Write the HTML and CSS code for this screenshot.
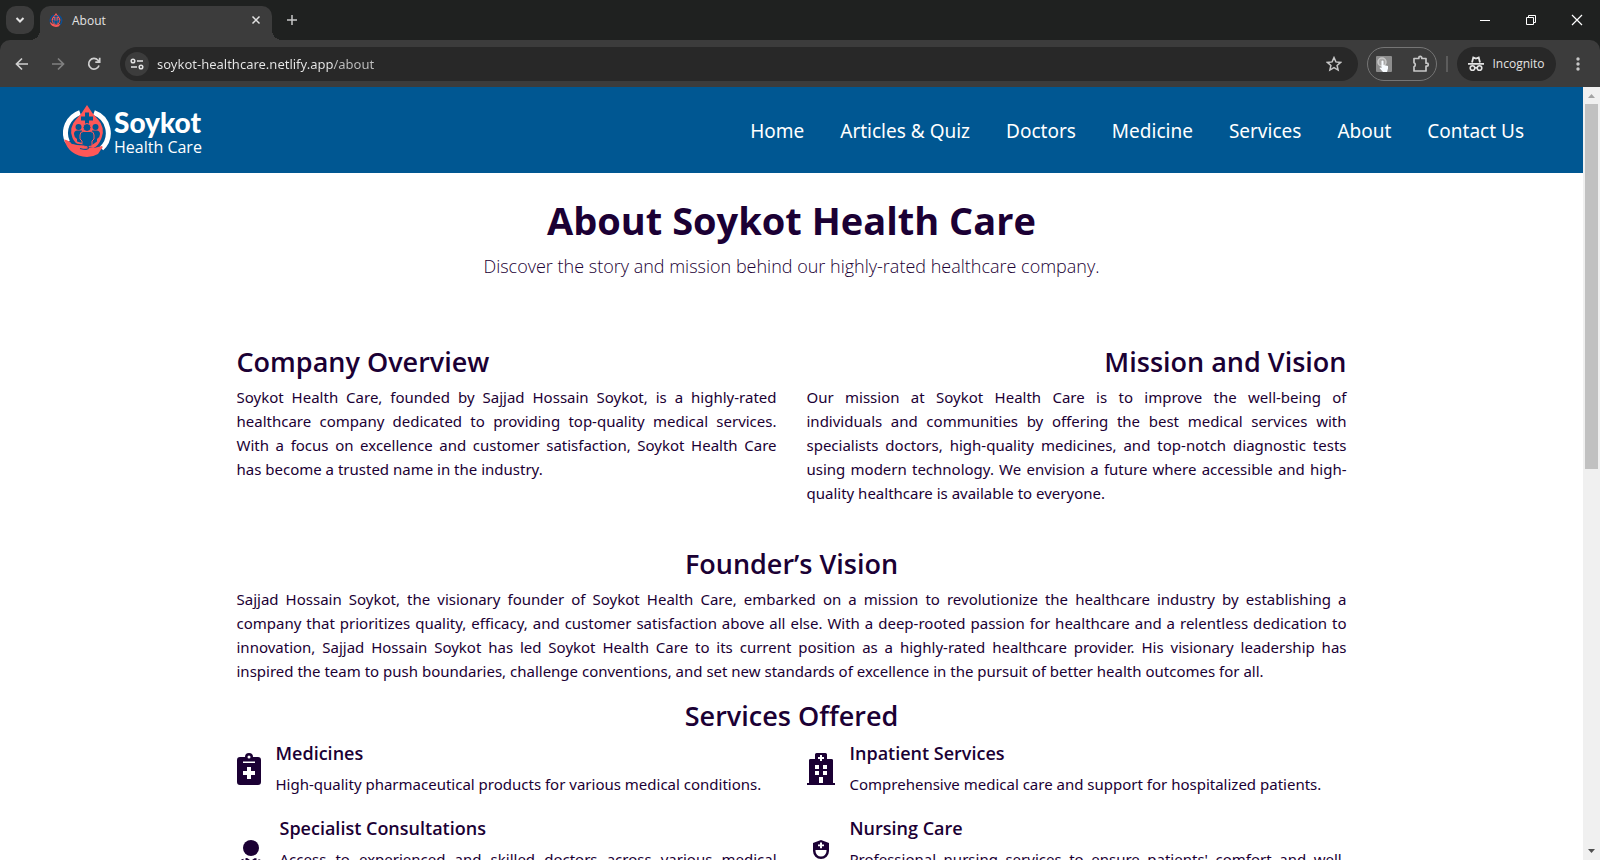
FILE: index.html
```html
<!DOCTYPE html>
<html lang="en">
<head>
<meta charset="utf-8">
<title>About</title>
<link rel="stylesheet" href="styles.css">
</head>
<body>
<div class="browser">
  <div class="tabstrip">
    <button class="tab-search" aria-label="Search tabs"><svg width="12" height="12" viewBox="0 0 12 12"><path d="M2.5 4 6 7.500 9.500 4" fill="none" stroke="#e3e3e3" stroke-width="2"/></svg></button>
    <div class="tab">
      <svg width="14" height="14" viewBox="0 0 48 52"><use href="#mark-ring" stroke="#0b4f96"/><use href="#mark-drop"/></svg>
      <span class="tab-title">About</span>
      <button class="plain tab-close" aria-label="Close tab"><svg width="10" height="10" viewBox="0 0 10 10"><path d="M1.500 1.500l7 7M8.500 1.500l-7 7" stroke="#e3e3e3" stroke-width="1.500"/></svg></button>
    </div>
    <button class="plain new-tab" aria-label="New tab"><svg width="12" height="12" viewBox="0 0 12 12"><path d="M6 1v10M1 6h10" stroke="#c7c7c7" stroke-width="1.500"/></svg></button>
    <div class="window-controls">
      <button class="plain" aria-label="Minimize"><svg width="12" height="12" viewBox="0 0 12 12"><path d="M1 6.500h10" stroke="#fff"/></svg></button>
      <button class="plain" aria-label="Restore"><svg width="12" height="12" viewBox="0 0 12 12"><path d="M1.500 3.500h7v7h-7zM3.500 3.500v-2h7v7h-2" fill="none" stroke="#fff"/></svg></button>
      <button class="plain" aria-label="Close"><svg width="12" height="12" viewBox="0 0 12 12"><path d="M1 1l10 10M11 1 1 11" stroke="#fff" stroke-width="1.200"/></svg></button>
    </div>
  </div>
  <div class="toolbar">
    <button class="plain nav-btn" aria-label="Back"><svg width="14" height="14" viewBox="0 0 14 14"><path d="M13 7H2M7 1.500 1.500 7 7 12.500" fill="none" stroke="#d0d0d0" stroke-width="1.700"/></svg></button>
    <button class="plain nav-btn" aria-label="Forward"><svg width="14" height="14" viewBox="0 0 14 14"><path d="M1 7h11M7 1.500 12.500 7 7 12.500" fill="none" stroke="#808080" stroke-width="1.700"/></svg></button>
    <button class="plain nav-btn" aria-label="Reload"><svg width="14" height="14" viewBox="0 0 14 14"><path d="M12 8.500A5.300 5.300 0 1 1 11 3.300L12.500 5M12.700.8v4.400H8.300" fill="none" stroke="#d0d0d0" stroke-width="1.700"/></svg></button>
    <div class="omnibox">
      <button class="site-info" aria-label="Site information"><svg width="14" height="12" viewBox="0 0 14 12"><g fill="none" stroke="#e3e3e3" stroke-width="1.500"><circle cx="3" cy="3" r="1.800"/><path d="M7 3h6M1 9h6"/><circle cx="11" cy="9" r="1.800"/></g></svg></button>
      <input class="address" type="text" aria-label="Address" value="soykot-healthcare.netlify.app/about">
      <button class="plain" aria-label="Bookmark"><svg width="16" height="16" viewBox="0 0 16 16"><path d="M8 1.600l1.900 4.300 4.700.5-3.500 3.100 1 4.600L8 11.700l-4.100 2.400 1-4.600L1.400 6.400l4.700-.5z" fill="none" stroke="#c7c7c7" stroke-width="1.500"/></svg></button>
    </div>
    <div class="extensions">
      <button class="plain" aria-label="Click extension"><svg width="16" height="16" viewBox="0 0 16 16"><rect width="16" height="16" rx="1" fill="#8e8e8e"/><circle cx="6" cy="6" r="4" fill="#a8a8a8" stroke="#c8c8c8" stroke-width="1.500"/><path d="M5.500 5q1-1 2 0v4l4.500 1v2.500L11 16H7l-3.500-4q.5-1.200 2 0z" fill="#f7fbff"/></svg></button>
      <button class="plain" aria-label="Extensions"><svg width="18" height="18" viewBox="0 0 18 18"><path d="M2 3.500h4.800V2.800a1.500 1.500 0 0 1 3 0v.7H14v4.700h.8a1.500 1.500 0 0 1 0 3H14V16H2v-4.200a2.200 2.200 0 0 0 0-4z" fill="none" stroke="#c7c7c7" stroke-width="1.700" stroke-linejoin="round"/></svg></button>
    </div>
    <span class="divider"></span>
    <button class="incognito"><svg width="16" height="16" viewBox="0 0 16 16"><path d="M4 6.500 5.300 1.500 8 2.500l2.700-1L12 6.500M0 7.800h16" fill="none" stroke="#e3e3e3" stroke-width="1.800"/><g fill="none" stroke="#e3e3e3" stroke-width="1.600"><circle cx="4.500" cy="12" r="2.300"/><circle cx="11.500" cy="12" r="2.300"/><path d="M6.800 11.800h2.400"/></g></svg>Incognito</button>
    <button class="plain menu" aria-label="Menu"><svg width="4" height="16" viewBox="0 0 4 16" fill="#c7c7c7"><circle cx="2" cy="3" r="1.700"/><circle cx="2" cy="8" r="1.700"/><circle cx="2" cy="13" r="1.700"/></svg></button>
  </div>
  <div class="viewport">
    <div class="page">
      <header class="site-header">
        <a class="brand" href="#">
          <svg width="48" height="52" viewBox="0 0 48 52">
            <defs>
              <path id="mark-ring" d="M17 7.600A21.500 21.500 0 0 0 4.500 37M31 7.600A21.500 21.500 0 0 1 38.500 43.500" fill="none" stroke-width="5"/>
              <g id="mark-drop">
                <path d="M24 0Q29 8.500 35 14.500a16.500 16.500 0 0 1 3.500 18.500q-3 8-8 10l-13-2q-6-3-8-8A16.500 16.500 0 0 1 13 14.500Q19 8.500 24 0z" fill="#ff5757"/>
                <path d="M1 34.500Q6 35 9 39l9 1 8 3h5l8-2q1.500 1.500-1 3.500l-3 4.500q-5 3-11 3-18-1-23-17.500z" fill="#ff5757"/>
                <path d="M22 7.500h4v4h4v4h-4v4h-4v-4h-4v-4h4z" fill="#005792"/>
                <g fill="#005792"><circle cx="15.500" cy="22" r="3"/><circle cx="32.500" cy="22" r="3"/><path d="M11 29q0-3.500 3.500-3.500H19V38l-5-1.500V34q-3-2-3-5zM37 29q0-3.500-3.500-3.500H29V40l5-3.500V34q3-2 3-5z"/></g>
                <g fill="#005792" stroke="#ff5757"><circle cx="24" cy="22.500" r="4"/><path d="M17 30q0-3.500 3.500-3.500h7q3.500 0 3.500 3.500v4l-2 2v5q-5 2-10-1v-4l-2-2z"/></g>
                <path d="M8 37.500q6 2.500 13 2.500 5 .5 4.500 3T17 43.500" fill="none" stroke="#005792" stroke-width="1.200"/>
              </g>
            </defs>
            <use href="#mark-ring" stroke="#fff"/><use href="#mark-drop"/>
          </svg>
          <span class="brand-text"><strong class="brand-name">Soykot</strong><span class="brand-sub">Health Care</span></span>
        </a>
        <nav class="site-nav">
          <a href="#">Home</a><a href="#">Articles &amp; Quiz</a><a href="#">Doctors</a><a href="#">Medicine</a><a href="#">Services</a><a href="#">About</a><a href="#">Contact Us</a>
        </nav>
      </header>
      <main class="content">
        <section class="intro">
          <h1>About Soykot Health Care</h1>
          <p>Discover the story and mission behind our highly-rated healthcare company.</p>
        </section>
        <div class="columns overview">
          <section>
            <h2>Company Overview</h2>
            <p>Soykot Health Care, founded by Sajjad Hossain Soykot, is a highly-rated healthcare company dedicated to providing top-quality medical services. With a focus on excellence and customer satisfaction, Soykot Health Care has become a trusted name in the industry.</p>
          </section>
          <section>
            <h2 class="right">Mission and Vision</h2>
            <p>Our mission at Soykot Health Care is to improve the well-being of individuals&nbsp;and communities by offering the best medical services with specialists doctors, high-quality medicines, and top-notch diagnostic tests using&nbsp;modern technology. We envision a future where accessible and high-quality healthcare is available to everyone.</p>
          </section>
        </div>
        <section class="founder">
          <h2 class="center">Founder’s Vision</h2>
          <p>Sajjad Hossain Soykot, the visionary founder of Soykot Health Care, embarked on a mission to revolutionize the healthcare industry by establishing a company that prioritizes quality, efficacy, and customer satisfaction above all else. With a deep-rooted passion for healthcare and a relentless dedication to innovation, Sajjad Hossain Soykot has led Soykot Health Care to its current position as a highly-rated healthcare provider. His visionary leadership has inspired&nbsp;the team to push boundaries, challenge conventions, and set new standards of excellence in the pursuit of better health outcomes for all.</p>
        </section>
        <section class="services">
          <h2 class="center">Services Offered</h2>
          <div class="columns service-grid">
            <article class="service">
              <svg width="24" height="32" viewBox="0 0 384 512" fill="currentColor"><path fill-rule="evenodd" d="M336 64h-80a64 64 0 0 0-128 0H48a48 48 0 0 0-48 48v352a48 48 0 0 0 48 48h288a48 48 0 0 0 48-48V112a48 48 0 0 0-48-48zM192 40a24 24 0 1 1 0 48 24 24 0 0 1 0-48zM96 136h192v24H96zM160 224h64v64h64v64h-64v64h-64v-64H96v-64h64z"/></svg>
              <div><h3>Medicines</h3><p>High-quality pharmaceutical products for various medical conditions.</p></div>
            </article>
            <article class="service">
              <svg width="28" height="32" viewBox="0 0 448 512" fill="currentColor"><path fill-rule="evenodd" d="M128 96V24q0-24 24-24h144q24 0 24 24v72h72q24 0 24 20v364h32v32H0v-32h32V116q0-20 24-20zM208 32v32h-32v32h32v32h32V96h32V64h-32V32zM128 192v64h64v-64zM256 192v64h64v-64zM128 288v64h64v-64zM256 288v64h64v-64zM192 384v96h64v-96z"/></svg>
              <div><h3>Inpatient Services</h3><p>Comprehensive medical care and support for hospitalized patients.</p></div>
            </article>
            <article class="service">
              <svg width="28" height="32" viewBox="0 0 448 512" fill="currentColor"><circle cx="224" cy="128" r="128"/><path d="M104 299v58a56 56 0 1 0 32 0v-66q20-3 32 0l56 42 56-42q14-2 32 2v44q-56 12-56 80h32q0-48 40-48t40 48h32q0-68-56-80v-32q104 30 104 135v24q0 48-45 48H45q-45 0-45-48v-24q0-105 104-141z"/></svg>
              <div><h3>Specialist Consultations</h3><p>Access to experienced and skilled doctors across various medical specialties and fields.</p></div>
            </article>
            <article class="service">
              <svg width="28" height="32" viewBox="0 0 448 512" fill="currentColor"><path fill-rule="evenodd" d="M96 48 224 0l128 48v128a128 128 0 0 1-256 0zM208 40v32h-32v28h32v32h32v-32h32V72h-32V40zM136 160v16a88 88 0 0 0 176 0v-16z"/><path d="M320 320l-96 96-96-96Q0 336 0 464q0 48 45 48h358q45 0 45-48 0-128-128-144z"/></svg>
              <div><h3>Nursing Care</h3><p>Professional nursing services to ensure patients' comfort and well-being throughout their entire stay.</p></div>
            </article>
          </div>
        </section>
      </main>
    </div>
    <div class="scrollbar">
      <svg width="17" height="17" viewBox="0 0 17 17"><path d="M5 11h7L8.500 7z" fill="#a3a3a3"/></svg>
      <div class="track"><div class="thumb"></div></div>
      <svg width="17" height="17" viewBox="0 0 17 17"><path d="M5 6h7l-3.500 4z" fill="#505050"/></svg>
    </div>
  </div>
</div>
</body>
</html>
```
FILE: styles.css
```css
* { box-sizing: border-box; }
body { margin: 0; font-family: "Open Sans", "Noto Sans", sans-serif; color: #1b0034; }
button { font: inherit; color: inherit; border: 0; padding: 0; display: flex; align-items: center; justify-content: center; }
.plain { background: none; }
h1, h2, h3, p { margin: 0; }

.browser { display: flex; flex-direction: column; height: 100vh; overflow: hidden; background: #1f2120; }

.tabstrip { display: flex; align-items: center; height: 40px; flex: none; padding-left: 6px; color: #e3e3e3; }
.tab-search { width: 28px; height: 28px; border-radius: 10px; background: #3c3c3c; }
.tab { position: relative; display: flex; align-items: center; align-self: flex-end; gap: 9px; width: 232px; height: 34px; margin-left: 6px; padding: 0 11px 6px 9px; border-radius: 10px 10px 0 0; background: #3c3c3c; }
.tab::before, .tab::after { content: ""; position: absolute; bottom: 0; width: 10px; height: 10px; }
.tab::before { left: -10px; background: radial-gradient(circle at 0 0, transparent 10px, #3c3c3c 10px); }
.tab::after { right: -10px; background: radial-gradient(circle at 100% 0, transparent 10px, #3c3c3c 10px); }
.tab-title { flex: 1; font-size: 12px; }
.new-tab { width: 40px; height: 40px; }
.window-controls { display: flex; margin-left: auto; }
.window-controls button { width: 46px; height: 40px; }

.toolbar { display: flex; align-items: center; height: 47px; flex: none; padding: 0 16px 0 4px; border-radius: 10px 10px 0 0; background: #3c3c3c; color: #e3e3e3; }
.nav-btn { width: 36px; height: 34px; }
.omnibox { display: flex; align-items: center; flex: 1; height: 34px; margin-left: 8px; padding: 0 16px 0 5px; border-radius: 17px; background: #282828; }
.site-info { width: 24px; height: 24px; border-radius: 50%; background: #3c3c3c; }
.address { flex: 1; min-width: 0; margin-left: 8px; padding: 0; border: 0; font: 13px/20px "Noto Sans", sans-serif; color: transparent; background: linear-gradient(90deg, #e8e8e8 176px, #c0c0c0 176px); background-clip: text; }
.extensions { display: flex; align-items: center; justify-content: space-between; width: 70px; height: 34px; margin-left: 9px; padding: 0 6px 0 8px; border: 1px solid #757575; border-radius: 17px; }
.divider { width: 2px; height: 16px; margin: 0 9px; background: #5c5c5c; }
.incognito { gap: 8px; width: 99px; height: 34px; border-radius: 17px; background: #282828; font-size: 12px; }
.menu { width: 12px; height: 34px; margin-left: 16px; }

.viewport { display: flex; flex: 1; min-height: 0; background: #fff; }
.page { flex: 1; min-width: 0; overflow: hidden; }
.scrollbar { display: flex; flex-direction: column; width: 17px; background: #f0f0f0; }
.track { flex: 1; padding: 0 2px; }
.thumb { height: 49.4%; background: #c1c1c1; }

.site-header { display: flex; align-items: center; justify-content: space-between; height: 86px; padding: 2px 59px 0 63px; background: #005792; color: #fff; }
.site-header a { color: inherit; text-decoration: none; }
.brand { display: flex; align-items: center; gap: 3px; }
.brand-text { display: flex; flex-direction: column; padding-top: 2px; }
.brand-name { font: 900 28px/30px Lato, sans-serif; }
.brand-sub { font-size: 16px; line-height: 20px; }
.site-nav { display: flex; gap: 36px; font-family: "Noto Sans", sans-serif; font-size: 19px; }

.content { max-width: 1110px; margin: 0 auto; }
.intro { padding-top: 24px; text-align: center; }
h1 { font-size: 38px; line-height: 46px; font-weight: 700; }
.intro p { margin-top: 9px; font-family: "Open Sans", sans-serif; font-size: 18px; line-height: 28px; font-weight: 300; text-align: center; }
h2 { font-size: 27px; line-height: 34px; font-weight: 600; }
p { font-family: "Noto Sans", sans-serif; font-size: 15px; line-height: 24px; text-align: justify; }
.right { text-align: right; }
.center { text-align: center; }
.columns { display: grid; grid-template-columns: 1fr 1fr; column-gap: 30px; }
.overview { margin-top: 65px; }
.overview p, .founder p { margin-top: 6px; }
.founder { margin-top: 42px; }
.services { margin-top: 16px; }
.service-grid { row-gap: 20px; margin-top: 8px; }
.service { display: flex; align-items: center; gap: 15px; }
.service svg { flex: none; }
h3 { margin-bottom: 7px; font-size: 18px; line-height: 24px; font-weight: 600; }
```
